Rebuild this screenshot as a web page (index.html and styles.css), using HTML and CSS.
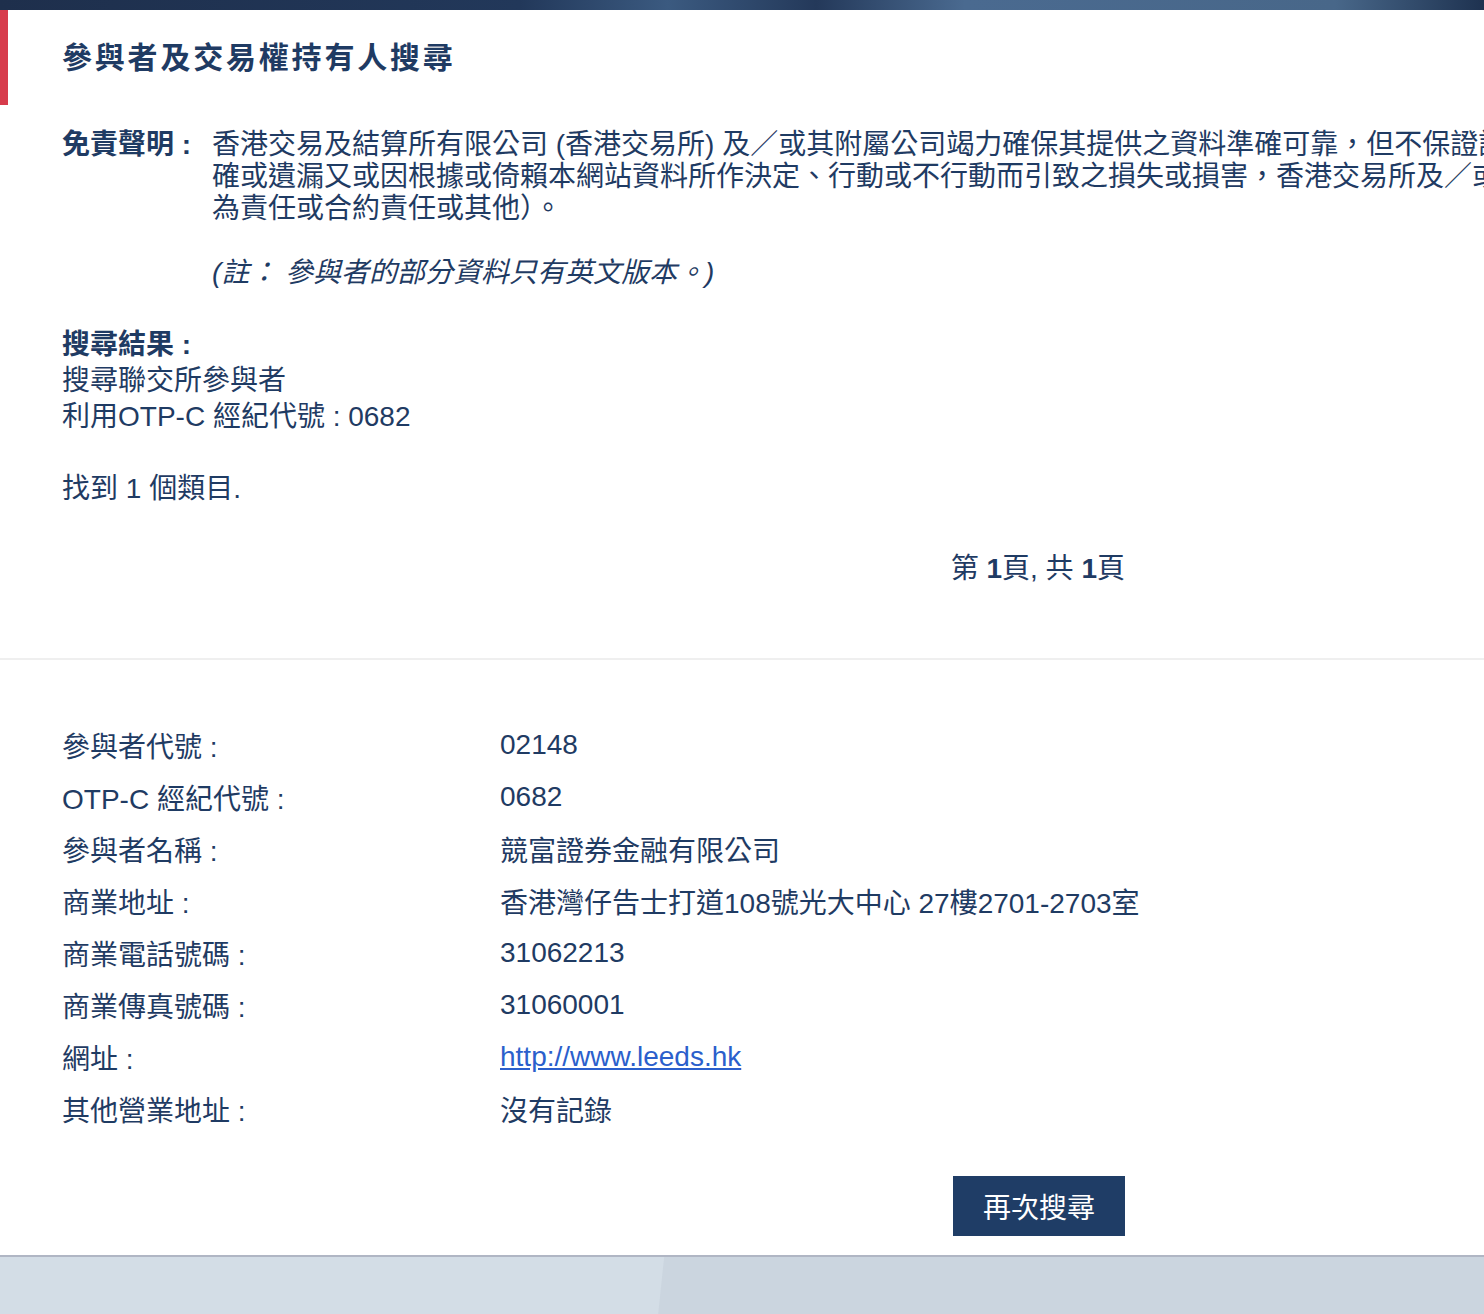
FILE: index.html
```html
<!DOCTYPE html>
<html lang="zh-Hant">
<head>
    <meta charset="UTF-8">
    <meta name="viewport" content="width=device-width, initial-scale=1.0">
    <title>參與者及交易權持有人搜尋</title>
    <link rel="stylesheet" href="styles.css">
</head>
<body>

<div class="topbar"></div>

<div class="panel">
    <div class="panel-header">
        <h1>參與者及交易權持有人搜尋</h1>
    </div>

    <div class="disclaimer">
        <div class="disclaimer-label">免責聲明 :</div>
        <div class="disclaimer-text">
            香港交易及結算所有限公司 (香港交易所) 及／或其附屬公司竭力確保其提供之資料準確可靠，但不保證該等資料絕對正確可靠，亦不會就任何不準確或遺漏又或因根據或倚賴本網站資料所作決定、行動或不行動而引致之損失或損害，香港交易所及／或其附屬公司概不負責（不論是民事侵權行為責任或合約責任或其他）。
            <p class="note">(註： 參與者的部分資料只有英文版本。)</p>
        </div>
    </div>

    <div class="result-info">
        <div class="bold">搜尋結果 :</div>
        <div>搜尋聯交所參與者</div>
        <div>利用OTP-C 經紀代號 : 0682</div>
        <div class="found">找到 1 個類目.</div>
    </div>

    <div class="pager">第 <b>1</b>頁, 共 <b>1</b>頁</div>

    <div class="divider"></div>

    <div class="details">
        <div class="row"><span class="label">參與者代號 :</span><span>02148</span></div>
        <div class="row"><span class="label">OTP-C 經紀代號 :</span><span>0682</span></div>
        <div class="row"><span class="label">參與者名稱 :</span><span>競富證券金融有限公司</span></div>
        <div class="row"><span class="label">商業地址 :</span><span>香港灣仔告士打道108號光大中心 27樓2701-2703室</span></div>
        <div class="row"><span class="label">商業電話號碼 :</span><span>31062213</span></div>
        <div class="row"><span class="label">商業傳真號碼 :</span><span>31060001</span></div>
        <div class="row"><span class="label">網址 :</span><a href="#">http://www.leeds.hk</a></div>
        <div class="row"><span class="label">其他營業地址 :</span><span>沒有記錄</span></div>
    </div>

    <div class="actions">
        <button class="search-again">再次搜尋</button>
    </div>
</div>

<div class="footer-bg"></div>

</body>
</html>
```

FILE: styles.css
```css
html, body {
    margin: 0;
    padding: 0;
}
body {
    font-family: "Liberation Sans", "Noto Sans CJK TC", sans-serif;
    font-size: 28px;
    color: #1f3b63;
    background-color: #d3dde6;
    overflow: hidden;
    width: 1484px;
    height: 1314px;
}
.topbar {
    height: 10px;
    background: linear-gradient(90deg, #1e2f4c 0%, #22385a 35%, #3b5a80 45%, #24395a 55%, #4a6a90 65%, #486789 90%, #1e3250 100%);
}
.panel {
    background-color: white;
    width: 2100px;
    border-bottom: 2px solid #b0b6c4;
    padding-bottom: 19px;
}
.panel-header {
    height: 95px;
    border-left: 8px solid #d73c4c;
    box-sizing: border-box;
    padding-left: 54px;
    display: flex;
    align-items: center;
}
.panel-header h1 {
    margin: 0;
    font-size: 30px;
    letter-spacing: 2.8px;
    font-weight: bold;
    line-height: 36px;
}
.disclaimer {
    display: flex;
    margin-top: 24px;
    padding-left: 62px;
    line-height: 32px;
}
.disclaimer-label {
    width: 150px;
    flex-shrink: 0;
    font-weight: bold;
}
.disclaimer-text {
    width: 1800px;
}
.note {
    margin: 32px 0 0 0;
    font-style: italic;
}
.result-info {
    padding-left: 62px;
    margin-top: 38px;
    line-height: 36px;
}
.bold {
    font-weight: bold;
}
.found {
    margin-top: 36px;
}
.pager {
    width: 1063px;
    padding-left: 62px;
    text-align: right;
    line-height: 36px;
    margin-top: 44px;
}
.divider {
    height: 2px;
    background-color: #efefef;
    margin-top: 71px;
}
.details {
    padding-left: 62px;
    margin-top: 59px;
}
.row {
    display: flex;
    height: 52px;
    align-items: center;
}
.label {
    width: 438px;
    flex-shrink: 0;
}
.row a {
    color: #2b5fcc;
    text-decoration: underline;
}
.actions {
    width: 1063px;
    padding-left: 62px;
    display: flex;
    justify-content: flex-end;
    margin-top: 41px;
}
.search-again {
    width: 172px;
    height: 60px;
    background-color: #1f3d66;
    color: white;
    border: none;
    font-family: "Liberation Sans", "Noto Sans CJK TC", sans-serif;
    font-size: 28px;
    padding: 0;
    cursor: pointer;
}
.footer-bg {
    height: 100px;
    background: linear-gradient(96deg, #d3dde6 0, #d3dde6 660px, #cbd5df 661px, #cbd5df 100%);
}
```
